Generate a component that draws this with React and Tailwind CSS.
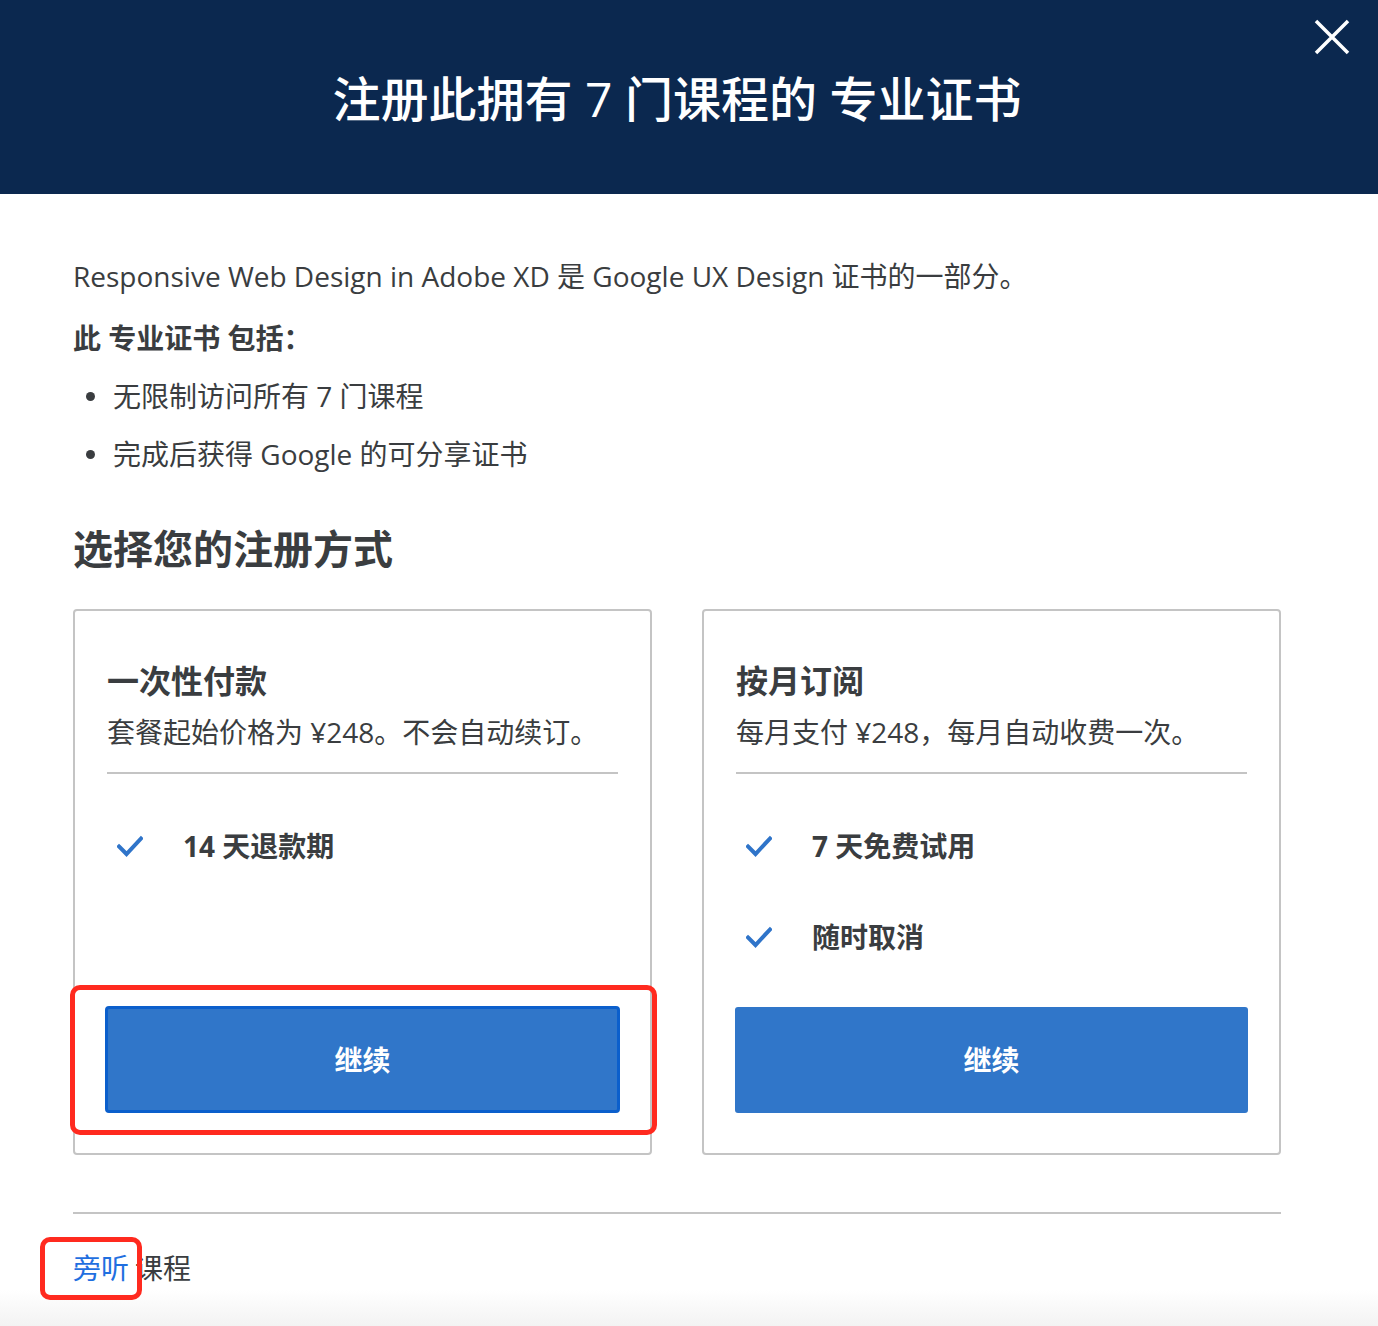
import React from 'react';

const CheckIcon = () => (
  <svg width="26" height="22" viewBox="0 0 26 22" className="shrink-0">
    <path d="M2 11.5 L9.5 19 L24 3.5" fill="none" stroke="#2f74c9" strokeWidth="4" strokeLinecap="square" />
  </svg>
);

const Feature = ({ children }) => (
  <div className="flex items-center h-[40px] pl-[10px]">
    <CheckIcon />
    <span className="ml-[40px] text-[28px] font-bold leading-[40px]">{children}</span>
  </div>
);

const PlanCard = ({ title, subtitle, features, focused }) => (
  <div className="flex flex-col border-2 border-[#c4c4c4] rounded-[4px] px-8 pt-[50px] pb-[40px]">
    <h3 className="text-[32px] font-bold leading-[40px]">{title}</h3>
    <p className="mt-[11px] text-[28px] leading-[40px]">{subtitle}</p>
    <div className="mt-[20px] h-[2px] bg-[#c4c4c4]" />
    <div className="mt-[52px] flex flex-col gap-[51px]">
      {features.map((f) => (
        <Feature key={f}>{f}</Feature>
      ))}
    </div>
    <div className="relative mt-auto -mx-[2px]">
      <button
        className={
          focused
            ? 'w-full h-[107px] rounded-[4px] border-[3px] border-[#0b5fcc] bg-[#3076c9] text-white text-[28px] font-bold'
            : 'w-full h-[106px] ml-px max-w-[513px] rounded-[3px] border-[3px] border-[#3076c9] bg-[#3076c9] text-white text-[28px] font-bold'
        }
      >
        继续
      </button>
      {focused && (
        <div className="absolute -left-[35px] -top-[21px] -right-[37px] -bottom-[22px] border-[5px] border-[#ff2a1f] rounded-[10px]" />
      )}
    </div>
  </div>
);

export default function App() {
  return (
    <div className="h-[1326px] w-[1378px] overflow-hidden bg-white flex flex-col text-[#3a3d40] font-['Open_Sans','Noto_Sans_CJK_SC',sans-serif]">
      <header className="relative h-[194px] shrink-0 bg-[#0b284f] flex items-center justify-center pr-[24px]">
        <h1 className="text-white text-[48px] font-medium leading-[60px] mt-[4px]">
          注册此拥有 7 门课程的 专业证书
        </h1>
        <button className="absolute right-[28px] top-[19px] w-[36px] h-[36px] flex items-center justify-center" aria-label="关闭">
          <svg width="36" height="36" viewBox="0 0 36 36">
            <path d="M2 2 L34 34 M34 2 L2 34" stroke="white" strokeWidth="3.5" />
          </svg>
        </button>
      </header>

      <main className="ml-[73px] w-[1208px]">
        <p className="mt-[62px] text-[28px] leading-[40px]">
          Responsive Web Design in Adobe XD 是 Google UX Design 证书的一部分。
        </p>
        <p className="mt-[22px] text-[28px] font-bold leading-[40px]">此 专业证书 包括：</p>
        <ul className="mt-[18px] flex flex-col gap-[18px]">
          {['无限制访问所有 7 门课程', '完成后获得 Google 的可分享证书'].map((t) => (
            <li key={t} className="flex items-center h-[40px]">
              <span className="ml-[13px] w-[9px] h-[9px] rounded-full bg-[#3a3d40]" />
              <span className="ml-[18px] text-[28px] leading-[40px]">{t}</span>
            </li>
          ))}
        </ul>

        <h2 className="mt-[47px] text-[40px] font-bold leading-[56px]">选择您的注册方式</h2>

        <div className="mt-[32px] grid grid-cols-2 gap-[50px] h-[546px]">
          <PlanCard
            title="一次性付款"
            subtitle="套餐起始价格为 ¥248。不会自动续订。"
            features={['14 天退款期']}
            focused
          />
          <PlanCard
            title="按月订阅"
            subtitle="每月支付 ¥248，每月自动收费一次。"
            features={['7 天免费试用', '随时取消']}
          />
        </div>

        <div className="mt-[57px] h-[2px] bg-[#c4c4c4]" />

        <p className="mt-[34px] text-[28px] leading-[40px]">
          <span className="relative text-[#1f6fe0]">
            旁听
            <span className="absolute -left-[33px] -top-[12px] -right-[13px] -bottom-[13px] border-[5px] border-[#ff2a1f] rounded-[10px]" />
          </span>
          <span className="ml-[6px]">课程</span>
        </p>
      </main>

      <div className="mt-auto h-[36px] bg-gradient-to-b from-white to-[#f3f3f3]" />
    </div>
  );
}
